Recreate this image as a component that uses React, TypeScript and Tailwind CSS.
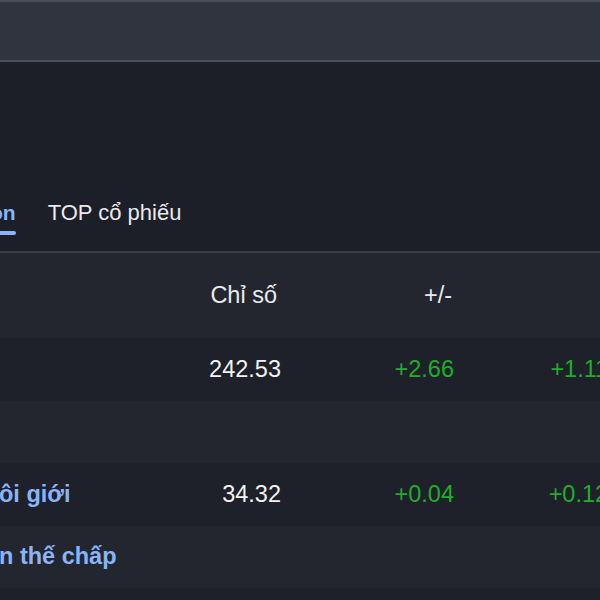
import React from "react";

type Row = {
  name?: string;
  value?: string;
  change?: string;
  pct?: string;
  tone: "dark" | "light";
};

const ROWS: Row[] = [
  { value: "242.53", change: "+2.66", pct: "+1.11%", tone: "dark" },
  { tone: "light" },
  { name: "ôi giới", value: "34.32", change: "+0.04", pct: "+0.12%", tone: "dark" },
  { name: "n thế chấp", tone: "light" },
  { tone: "dark" },
];

function TableRow({ row }: { row: Row }) {
  return (
    <div
      className={`flex items-center h-[62.5px] text-[23.5px] ${
        row.tone === "dark" ? "bg-[#1e2129]" : "bg-[#23262e]"
      }`}
    >
      <div className="w-[200px] shrink-0 whitespace-nowrap font-bold text-[#8ab4f8] -ml-[1px]">
        {row.name}
      </div>
      <div className="w-[82px] shrink-0 text-right text-[#f1f3f4]">{row.value}</div>
      <div className="w-[173px] shrink-0 text-right text-[#1fae2a]">{row.change}</div>
      <div className="w-[175px] shrink-0 text-right text-[#1fae2a] whitespace-nowrap">
        {row.pct}
      </div>
    </div>
  );
}

export default function App() {
  return (
    <div
      className="w-[600px] h-[600px] overflow-hidden bg-[#1c1f27] text-[#e8eaed]"
      style={{ fontFamily: '"Liberation Sans", Arial, sans-serif' }}
    >
      {/* top bar */}
      <div className="h-[62px] bg-[#30343f] border-t-2 border-b-2 border-[#4a4e59]" />

      {/* tabs */}
      <div className="h-[189px] pt-[139px] pb-[16px] flex gap-[32px] whitespace-nowrap">
        <div className="flex flex-col -ml-[10px]">
          <span className="h-[24px] leading-[24px] text-[21px] font-bold text-[#8ab4f8]">on</span>
          <span className="mt-[6px] h-[4px] rounded-sm bg-[#8ab4f8]" />
        </div>
        <div className="flex flex-col">
          <span className="h-[24px] leading-[24px] text-[22px] text-[#e8eaed]">TOP cổ phiếu</span>
        </div>
      </div>
      <div className="h-[2px] bg-[#3b3e47]" />

      {/* table header */}
      <div className="flex items-center h-[85px] bg-[#23262e] text-[23.5px] text-[#e8eaed]">
        <div className="w-[200px] shrink-0" />
        <div className="w-[82px] shrink-0 text-right pr-[5px] whitespace-nowrap">Chỉ số</div>
        <div className="w-[173px] shrink-0 text-right pr-[3px]">+/-</div>
        <div className="w-[175px] shrink-0" />
      </div>

      {ROWS.map((row, i) => (
        <TableRow key={i} row={row} />
      ))}
    </div>
  );
}
